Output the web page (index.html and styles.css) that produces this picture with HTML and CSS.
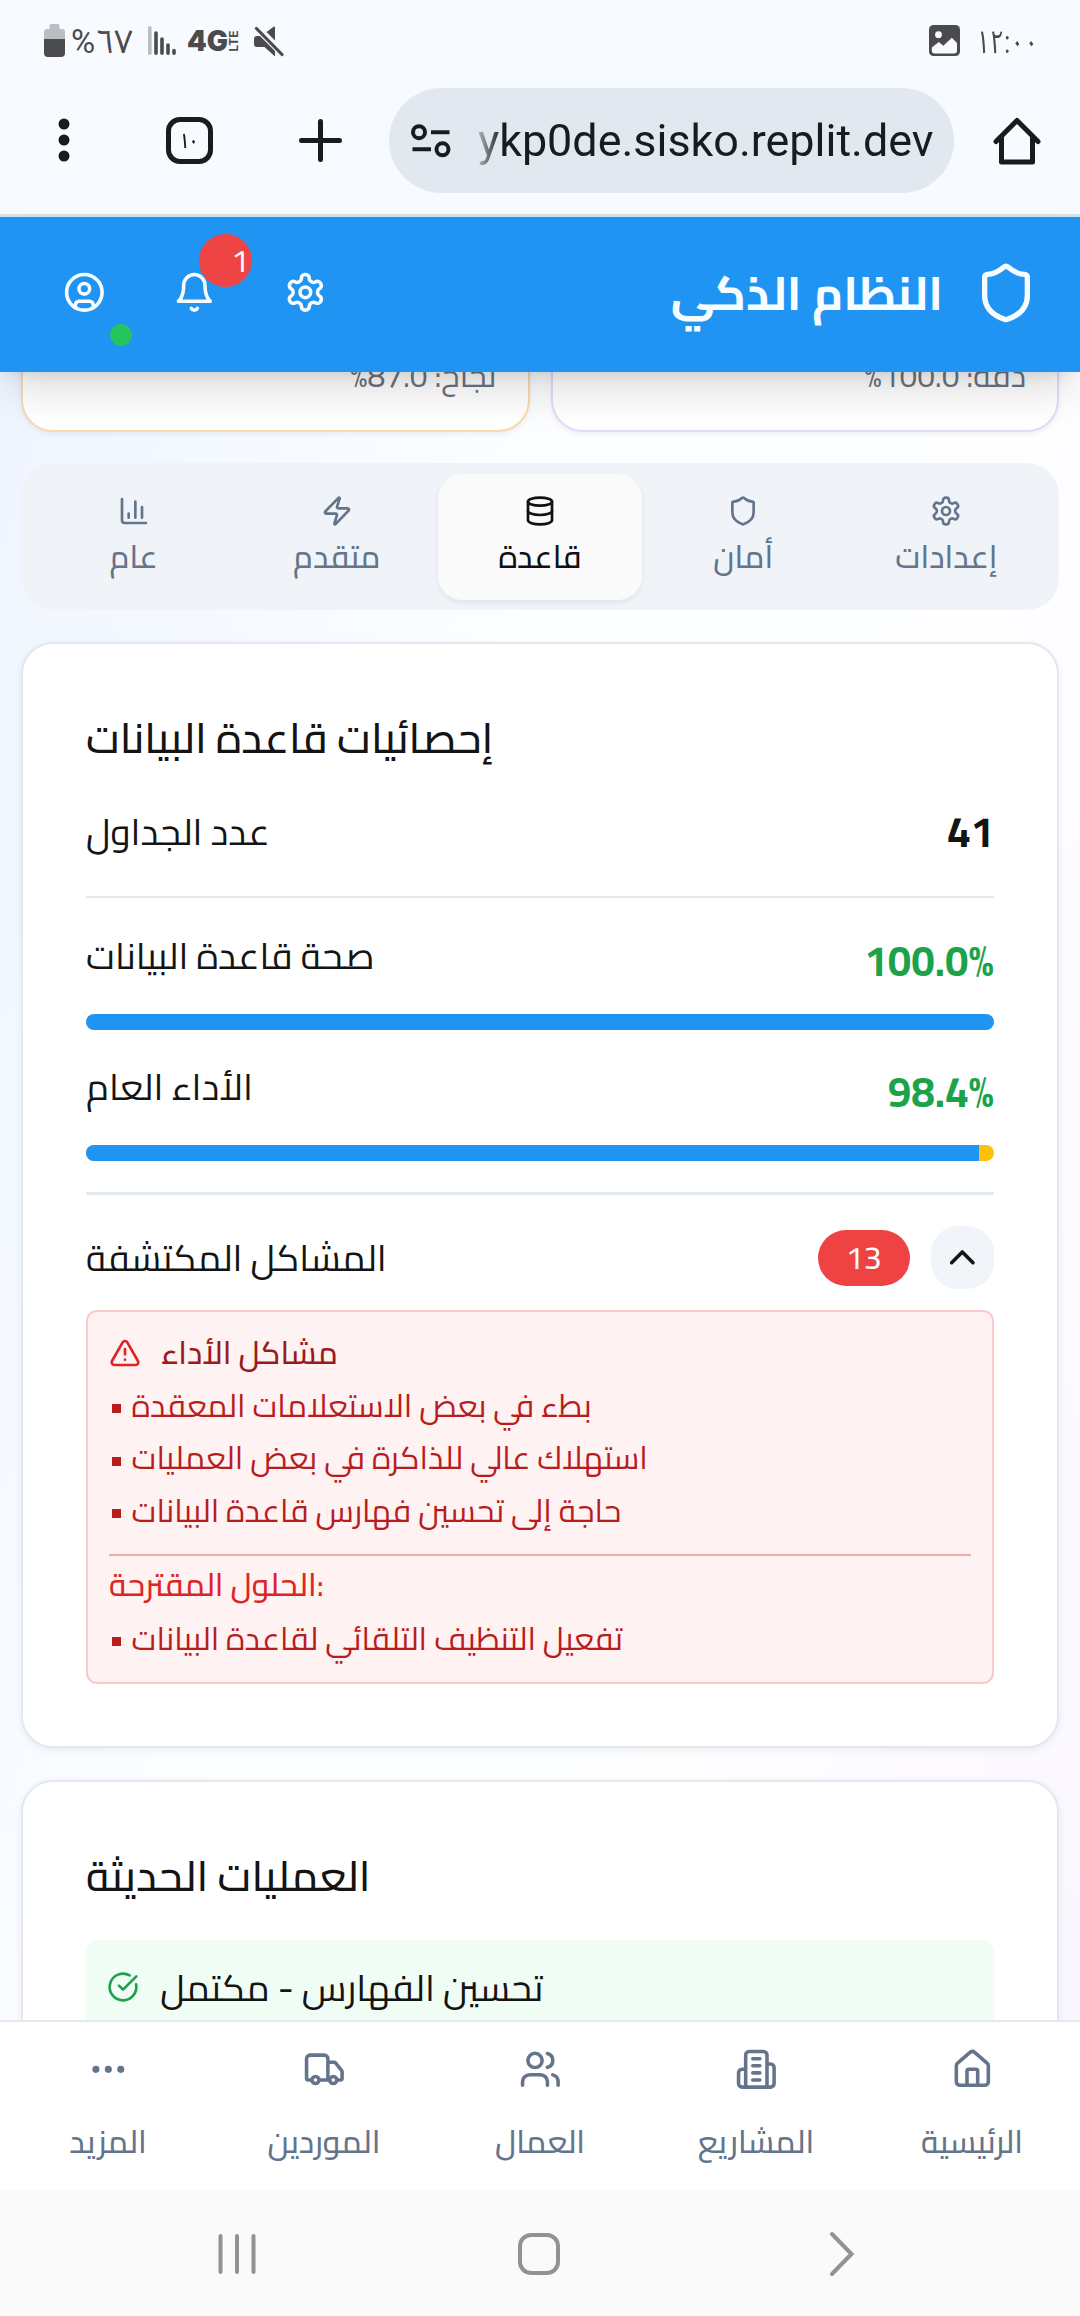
FILE: index.html
```html
<!DOCTYPE html>
<html lang="ar">
<head>
<meta charset="utf-8">
<title>النظام الذكي</title>
<link rel="stylesheet" href="styles.css">
</head>
<body>
<svg class="sprite" aria-hidden="true">
  <symbol id="gear" viewBox="0 0 24 24"><path d="M12.22 2h-.44a2 2 0 0 0-2 2v.18a2 2 0 0 1-1 1.73l-.43.25a2 2 0 0 1-2 0l-.15-.08a2 2 0 0 0-2.73.73l-.22.38a2 2 0 0 0 .73 2.73l.15.1a2 2 0 0 1 1 1.72v.51a2 2 0 0 1-1 1.74l-.15.09a2 2 0 0 0-.73 2.73l.22.38a2 2 0 0 0 2.73.73l.15-.08a2 2 0 0 1 2 0l.43.25a2 2 0 0 1 1 1.73V20a2 2 0 0 0 2 2h.44a2 2 0 0 0 2-2v-.18a2 2 0 0 1 1-1.73l.43-.25a2 2 0 0 1 2 0l.15.08a2 2 0 0 0 2.73-.73l.22-.39a2 2 0 0 0-.73-2.73l-.15-.08a2 2 0 0 1-1-1.74v-.5a2 2 0 0 1 1-1.74l.15-.09a2 2 0 0 0 .73-2.73l-.22-.38a2 2 0 0 0-2.73-.73l-.15.08a2 2 0 0 1-2 0l-.43-.25a2 2 0 0 1-1-1.73V4a2 2 0 0 0-2-2z"/><circle cx="12" cy="12" r="3"/></symbol>
  <symbol id="shield" viewBox="0 0 24 24"><path d="M20 13c0 5-3.5 7.5-7.66 8.95a1 1 0 0 1-.67-.01C7.5 20.5 4 18 4 13V6a1 1 0 0 1 1-1c2 0 4.5-1.2 6.24-2.72a1.17 1.17 0 0 1 1.52 0C14.51 3.81 17 5 19 5a1 1 0 0 1 1 1z"/></symbol>
</svg>

<div class="status">
  <div class="status-left">
    <svg class="battery" viewBox="0 0 21 33"><path class="battery-empty" d="M5.500 1.500a1.500 1.500 0 0 1 1.500-1.500h7a1.500 1.500 0 0 1 1.500 1.500V5H18a3 3 0 0 1 3 3v7H0V8a3 3 0 0 1 3-3h2.500z"/><path class="battery-full" d="M0 15h21v14a4 4 0 0 1-4 4H4a4 4 0 0 1-4-4z"/></svg>
    <span class="percent">%٦٧</span>
    <svg class="signal" viewBox="0 0 28 29"><g stroke-width="3.600" stroke-linecap="round"><path class="signal-off" d="M1.800 1.800v25.400"/><path d="M8 7v20.200M14 13v14.200M20 19v8.200M26 24.500v2.700"/></g></svg>
    <svg class="lte" viewBox="0 0 51 22"><text class="lte-main" x="-1" y="21" textLength="41" lengthAdjust="spacingAndGlyphs">4G</text><text class="lte-sub" transform="translate(50 21.500) rotate(-90)" textLength="21" lengthAdjust="spacingAndGlyphs">LTE</text></svg>
    <svg class="mute" viewBox="0 0 30 31"><path class="fill" d="M0 13a3 3 0 0 1 3-3h3l15 15v5.500L10.500 21H3a3 3 0 0 1-3-3zM21 1v13.500L12.500 6 20 .5z"/><path class="slash" d="M2.500 2.500l25.500 26"/></svg>
  </div>
  <div class="status-right">
    <svg class="photo" viewBox="0 0 31 31"><rect width="31" height="31" rx="4.500"/><circle class="hole" cx="9.500" cy="9.700" r="3.400"/><path class="hole" d="M2.800 22.500l7-5.500 4.500 3.800 8.500-8 5.200 5.200v7.500a3 3 0 0 1-3 3H5.800a3 3 0 0 1-3-3z"/></svg>
    <span class="clock">١٢:٠٠</span>
  </div>
</div>

<div class="toolbar">
  <svg class="more" viewBox="0 0 12 44"><circle cx="6" cy="6" r="5.500"/><circle cx="6" cy="22" r="5.500"/><circle cx="6" cy="38" r="5.500"/></svg>
  <div class="tabcount"><span>١٠</span></div>
  <svg class="plus" viewBox="0 0 43 43"><path d="M21.500 2.500v38M2.500 21.500h38"/></svg>
  <div class="url">
    <svg class="tune" viewBox="0 0 40 34"><circle cx="8" cy="8.200" r="6"/><path d="M20 8.200h18.500M1.500 25.300h18.500"/><circle cx="31.500" cy="25.300" r="6"/></svg>
    <span class="address">ykp0de.sisko.replit.dev</span>
  </div>
  <svg class="browser-home" viewBox="0 0 48 48"><path d="M3 24.500L24 3.500l21 21M8.500 20v25h31V20"/></svg>
</div>

<header class="header">
  <div class="header-actions">
    <div class="action"><svg class="icon" viewBox="0 0 24 24"><circle cx="12" cy="12" r="10"/><circle cx="12" cy="10" r="3"/><path d="M7 20.662V19a2 2 0 0 1 2-2h6a2 2 0 0 1 2 2v1.662"/></svg><span class="online"></span></div>
    <div class="action"><svg class="icon" viewBox="0 0 24 24"><path d="M6 8a6 6 0 0 1 12 0c0 7 3 9 3 9H3s3-2 3-9"/><path d="M10.300 21a1.940 1.940 0 0 0 3.400 0"/></svg><span class="count">1</span></div>
    <div class="action"><svg class="icon"><use href="#gear"/></svg></div>
  </div>
  <div class="brand"><h1>النظام الذكي</h1><svg class="icon brand-icon"><use href="#shield"/></svg></div>
</header>

<main class="main">
  <div class="metrics">
    <div class="metric orange" dir="rtl">نجاح: 87.0%</div>
    <div class="metric purple" dir="rtl">دقة: 100.0%</div>
  </div>

  <div class="tabs">
    <div class="tab"><svg class="icon small" viewBox="0 0 24 24"><path d="M3 3v16a2 2 0 0 0 2 2h16M18 17V9M13 17V5M8 17v-3"/></svg><span>عام</span></div>
    <div class="tab"><svg class="icon small" viewBox="0 0 24 24"><path d="M4 14a1 1 0 0 1-.78-1.630l9.900-10.200a.5.5 0 0 1 .86.46l-1.920 6.020A1 1 0 0 0 13 10h7a1 1 0 0 1 .78 1.630l-9.900 10.200a.5.5 0 0 1-.86-.46l1.920-6.020A1 1 0 0 0 11 14z"/></svg><span>متقدم</span></div>
    <div class="tab active"><svg class="icon small" viewBox="0 0 24 24"><ellipse cx="12" cy="5" rx="9" ry="3"/><path d="M3 5V19A9 3 0 0 0 21 19V5"/><path d="M3 12A9 3 0 0 0 21 12"/></svg><span>قاعدة</span></div>
    <div class="tab"><svg class="icon small"><use href="#shield"/></svg><span>أمان</span></div>
    <div class="tab"><svg class="icon small"><use href="#gear"/></svg><span>إعدادات</span></div>
  </div>

  <section class="card">
    <h2>إحصائيات قاعدة البيانات</h2>
    <div class="row row-tables"><span>عدد الجداول</span><b>41</b></div>
    <div class="row row-health"><span>صحة قاعدة البيانات</span><b class="good">100.0%</b></div>
    <div class="bar"><div class="bar-fill" style="width:100%"></div></div>
    <div class="row row-perf"><span>الأداء العام</span><b class="good">98.4%</b></div>
    <div class="bar"><div class="bar-fill" style="width:98.4%"></div></div>
    <div class="problems-head">
      <span>المشاكل المكتشفة</span>
      <div class="problems-tools"><span class="pill">13</span><span class="toggle"><svg class="icon small" viewBox="0 0 24 24"><path d="m18 15-6-6-6 6"/></svg></span></div>
    </div>
    <div class="alert">
      <div class="alert-title"><svg class="icon small" viewBox="0 0 24 24"><path d="m21.730 18-8-14a2 2 0 0 0-3.480 0l-8 14A2 2 0 0 0 4 21h16a2 2 0 0 0 1.730-3"/><path d="M12 9v4M12 17h.01"/></svg><span>مشاكل الأداء</span></div>
      <ul>
        <li>بطء في بعض الاستعلامات المعقدة</li>
        <li>استهلاك عالي للذاكرة في بعض العمليات</li>
        <li>حاجة إلى تحسين فهارس قاعدة البيانات</li>
      </ul>
      <div class="fixes">
        <p>الحلول المقترحة:</p>
        <ul><li>تفعيل التنظيف التلقائي لقاعدة البيانات</li></ul>
      </div>
    </div>
  </section>

  <section class="card">
    <h2>العمليات الحديثة</h2>
    <div class="done"><svg class="icon small" viewBox="0 0 24 24"><path d="M21.801 10A10 10 0 1 1 17 3.335"/><path d="m9 11 3 3L22 4"/></svg><span>تحسين الفهارس - مكتمل</span></div>
  </section>
</main>

<nav class="nav">
  <div class="nav-item"><svg class="icon" viewBox="0 0 24 24"><circle cx="12" cy="12" r="1"/><circle cx="19" cy="12" r="1"/><circle cx="5" cy="12" r="1"/></svg><span>المزيد</span></div>
  <div class="nav-item"><svg class="icon" viewBox="0 0 24 24"><path d="M14 18V6a2 2 0 0 0-2-2H4a2 2 0 0 0-2 2v11a1 1 0 0 0 1 1h2M15 18H9M19 18h2a1 1 0 0 0 1-1v-3.650a1 1 0 0 0-.22-.624l-3.480-4.350A1 1 0 0 0 17.520 8H14"/><circle cx="17" cy="18" r="2"/><circle cx="7" cy="18" r="2"/></svg><span>الموردين</span></div>
  <div class="nav-item"><svg class="icon" viewBox="0 0 24 24"><path d="M16 21v-2a4 4 0 0 0-4-4H6a4 4 0 0 0-4 4v2"/><circle cx="9" cy="7" r="4"/><path d="M22 21v-2a4 4 0 0 0-3-3.870M16 3.130a4 4 0 0 1 0 7.750"/></svg><span>العمال</span></div>
  <div class="nav-item"><svg class="icon" viewBox="0 0 24 24"><path d="M6 22V4a2 2 0 0 1 2-2h8a2 2 0 0 1 2 2v18ZM6 12H4a2 2 0 0 0-2 2v6a2 2 0 0 0 2 2h2M18 9h2a2 2 0 0 1 2 2v9a2 2 0 0 1-2 2h-2M10 6h4M10 10h4M10 14h4M10 18h4"/></svg><span>المشاريع</span></div>
  <div class="nav-item"><svg class="icon" viewBox="0 0 24 24"><path d="M15 21v-8a1 1 0 0 0-1-1h-4a1 1 0 0 0-1 1v8"/><path d="M3 10a2 2 0 0 1 .709-1.528l7-5.999a2 2 0 0 1 2.582 0l7 5.999A2 2 0 0 1 21 10v9a2 2 0 0 1-2 2H5a2 2 0 0 1-2-2z"/></svg><span>الرئيسية</span></div>
</nav>

<div class="system">
  <svg class="recents" viewBox="0 0 40 42"><path d="M3.500 3v36M20 3v36M36.500 3v36"/></svg>
  <svg class="sys-home" viewBox="0 0 42 42"><rect x="2" y="2" width="38" height="38" rx="11"/></svg>
  <svg class="back" viewBox="0 0 24 44"><path d="M2 2l19.500 20L2 42"/></svg>
</div>
</body>
</html>
```
FILE: styles.css
```css
* { box-sizing: border-box; margin: 0; padding: 0; }
html, body { height: 2316px; width: 1080px; overflow: hidden; }
body {
  display: flex;
  flex-direction: column;
  background: #fff;
  color: #141414;
  font-family: Cairo, "DejaVu Sans", sans-serif;
  font-size: 36.850px;
  font-weight: 400;
  line-height: 53.33px;
}
svg { display: block; flex: none; overflow: visible; }
.sprite { width: 0; height: 0; position: absolute; }
ul { list-style: none; }

.icon {
  width: 42.67px;
  height: 42.67px;
  fill: none;
  stroke: currentColor;
  stroke-width: 2;
  stroke-linecap: round;
  stroke-linejoin: round;
}
.icon.small { width: 32px; height: 32px; }

/* phone status bar */
.status {
  height: 82px;
  flex: none;
  display: flex;
  justify-content: space-between;
  align-items: flex-start;
  padding: 24px 46px 0 44px;
  background: #f7faff;
  color: #4b4b4d;
  font-family: Roboto, "Noto Sans Arabic", "DejaVu Sans", sans-serif;
}
.status-left, .status-right { display: flex; }
.battery { width: 21px; height: 33px; }
.battery-empty { fill: #babdc2; }
.battery-full { fill: #4b4b4d; }
.percent { width: 62px; margin: 2px 0 0 6px; font-size: 33px; line-height: 32px; white-space: nowrap; }
.signal { width: 28px; height: 29px; margin: 2px 0 0 15px; stroke: #4b4b4d; }
.signal-off { stroke: #babdc2; }
.lte { width: 51px; height: 22px; margin: 5.500px 0 0 12px; fill: #4b4b4d; font-family: Inter, sans-serif; font-weight: 900; }
.lte-main { font-size: 28px; }
.lte-sub { font-size: 11.500px; font-weight: 700; }
.mute { width: 30px; height: 31px; margin: 1.500px 0 0 15px; }
.mute .fill { fill: #4b4b4d; }
.slash { stroke: #4b4b4d; stroke-width: 3.200; stroke-linecap: round; }
.photo { width: 31px; height: 31px; margin-top: 1px; fill: #4b4b4d; }
.photo .hole { fill: #f7faff; }
.clock { margin: 2px 0 0 16px; width: 58px; font-size: 32px; line-height: 32px; white-space: nowrap; transform: scaleX(.77); transform-origin: left; }

/* browser toolbar */
.toolbar {
  height: 135px;
  flex: none;
  display: flex;
  align-items: flex-start;
  padding: 6px 39px 0 57.500px;
  background: #f7faff;
  border-bottom: 3px solid #d3e3ec;
  color: #181c1f;
}
.more { width: 12px; height: 44px; margin-top: 30px; fill: currentColor; }
.tabcount {
  width: 47px;
  height: 47px;
  margin: 29px 0 0 96.500px;
  border: 5px solid currentColor;
  border-radius: 14px;
  display: flex;
  align-items: center;
  justify-content: center;
  font: 600 21px/30px "Noto Sans Arabic", "DejaVu Sans", sans-serif;
}
.tabcount span { transform: scaleX(.75); }
.plus { width: 43px; height: 43px; margin: 31px 0 0 86px; fill: none; stroke: currentColor; stroke-width: 5; stroke-linecap: round; }
.url {
  width: 565px;
  height: 105px;
  margin-left: 47px;
  padding: 0 20px 0 22px;
  border-radius: 53px;
  background: #e1e8f0;
  display: flex;
  align-items: center;
}
.tune { width: 40px; height: 34px; fill: none; stroke: currentColor; stroke-width: 4; }
.address {
  margin-left: 27px;
  font: 400 44.900px/60px Roboto, sans-serif;
  white-space: nowrap;
  -webkit-mask-image: linear-gradient(to right, rgba(0,0,0,.25), #000 24px);
  mask-image: linear-gradient(to right, rgba(0,0,0,.25), #000 24px);
}
.browser-home { width: 48px; height: 48px; margin: 28.500px 0 0 39.500px; fill: none; stroke: currentColor; stroke-width: 5; stroke-linecap: round; stroke-linejoin: round; }

/* app header */
.header {
  height: 155px;
  flex: none;
  position: relative;
  z-index: 1;
  display: flex;
  justify-content: space-between;
  align-items: center;
  padding: 0 42px 4px 32px;
  background: #2094f3;
  color: #f7fdff;
  box-shadow: 0 26.670px 40px -8px rgba(0,0,0,.13), 0 10.670px 16px -10.670px rgba(0,0,0,.13);
}
.header-actions { display: flex; gap: 5.700px; }
.action { position: relative; width: 104.670px; height: 104px; display: flex; align-items: center; justify-content: center; }
.online { position: absolute; left: 78px; top: 83px; width: 22px; height: 22px; border-radius: 50%; background: #22c55e; }
.count {
  position: absolute;
  left: 57px;
  top: -7px;
  width: 53px;
  height: 53px;
  border-radius: 50%;
  background: #ef4444;
  font-size: 32px;
  line-height: 53px;
  padding-left: 32px;
}
.brand { display: flex; align-items: center; gap: 31px; }
.brand h1 { font-size: 47.200px; line-height: 75px; font-weight: 700; }
.brand-icon { width: 64px; height: 64px; }

/* page */
.main {
  flex: 1;
  min-height: 0;
  overflow: hidden;
  padding: 0 21px;
  background: linear-gradient(105deg, #eff5ff, #fdfeff 40%, #fefeff 70%, #faf5ff 105%);
}
.metrics { display: grid; grid-template-columns: 1fr 1fr; gap: 21px; margin-top: -140px; }
.metric {
  height: 200px;
  display: flex;
  align-items: flex-end;
  padding: 0 31px 32px;
  border: 2.670px solid;
  border-radius: 32px;
  background: #fff;
  color: #6b7280;
  font-size: 31.600px;
  line-height: 42.670px;
  box-shadow: 0 2.670px 5.330px rgba(0,0,0,.05);
}
.metric.orange { border-color: #fad9ae; }
.metric.purple { border-color: #e9d8fb; }

.tabs {
  height: 147px;
  margin-top: 31px;
  padding: 11px;
  display: grid;
  grid-template-columns: repeat(5, 1fr);
  border-radius: 32px;
  background: #f0f4f9;
  color: #64748b;
}
.tab {
  height: 126px;
  padding-top: 20.500px;
  display: flex;
  flex-direction: column;
  align-items: center;
  gap: 9px;
  border-radius: 24px;
  font-size: 31.600px;
  line-height: 42.670px;
  font-weight: 500;
}
.tab.active { background: #fafafa; color: #111; box-shadow: 0 2.670px 5.330px rgba(0,0,0,.06); }

.card {
  margin-top: 32px;
  padding: 61.500px 63px 62px;
  border: 2.670px solid #e2e8f0;
  border-radius: 32px;
  background: #fff;
  box-shadow: 0 2.670px 8px rgba(0,0,0,.06);
}
.card + .card { margin-top: 31.300px; padding-top: 62.500px; height: 600px; }
h2 { font-size: 42.500px; line-height: 64px; font-weight: 500; }
.row { display: flex; justify-content: space-between; align-items: flex-start; height: 64px; }
.row b { font-size: 42.300px; line-height: 64px; font-weight: 700; }
.row .good { color: #1ca34a; }
.row-tables { height: 98px; margin-top: 30px; border-bottom: 2.670px solid #e2e8f0; padding-bottom: 32px; align-items: center; }
.row-health { margin-top: 31.500px; }
.row-perf { margin-top: 30.500px; }
.bar { height: 16px; margin-top: 20.700px; border-radius: 8px; overflow: hidden; background: #ffc107; }
.bar-fill { height: 100%; background: #2094f3; }
.problems-head {
  display: flex;
  justify-content: space-between;
  align-items: center;
  margin-top: 31px;
  padding-top: 31px;
  border-top: 3px solid #e2e8f0;
}
.problems-tools { display: flex; align-items: center; gap: 21.300px; }
.pill { width: 92px; height: 56px; border-radius: 28px; background: #ef4343; color: #fafafa; font-size: 32px; line-height: 55px; font-weight: 500; text-align: center; }
.toggle { width: 63px; height: 63.500px; border-radius: 27px; background: #f1f5f9; display: flex; align-items: center; justify-content: center; }
.toggle .icon { width: 42.670px; height: 42.670px; }

.alert {
  margin-top: 21px;
  height: 374px;
  padding: 19.500px 21px;
  border: 2.670px solid #facaca;
  border-radius: 11px;
  background: #fef2f2;
  color: #b91c1c;
  font-size: 31.550px;
  line-height: 42.670px;
}
.alert-title { display: flex; align-items: center; gap: 20px; color: #991b1b; font-weight: 500; }
.alert-title .icon { color: #dc2626; }
.alert li { display: flex; align-items: center; margin-top: 10px; }
.alert li::before { content: ""; width: 9px; height: 9px; margin: 5px 10.500px 0 3px; background: #b91c1c; }
.fixes { margin-top: 21.300px; border-top: 2.670px solid #f1aaaa; padding-top: 8.500px; }
.fixes p { color: #dc2626; font-weight: 500; }
.fixes li { margin-top: 10.500px; }

.done {
  display: flex;
  align-items: center;
  gap: 21.300px;
  margin-top: 32px;
  padding: 20.500px 21px;
  border-radius: 11px;
  background: #f0fdf4;
}
.done .icon { color: #1fa04d; }

/* bottom navigation */
.nav {
  height: 170px;
  flex: none;
  display: grid;
  grid-template-columns: repeat(5, 1fr);
  background: #fff;
  border-top: 2px solid #e2e8f0;
  color: #64748b;
}
.nav-item { display: flex; flex-direction: column; align-items: center; padding-top: 25.500px; gap: 30.500px; font-size: 31.700px; line-height: 42.670px; font-weight: 500; }

/* system navigation */
.system { height: 126px; flex: none; display: flex; padding-left: 217px; background: #fafafa; fill: none; stroke: #929292; stroke-width: 4; stroke-linecap: round; }
.recents { width: 40px; height: 42px; margin-top: 43px; }
.sys-home { width: 42px; height: 42px; margin: 43px 0 0 261px; }
.back { width: 24px; height: 44px; margin: 42px 0 0 270px; }
```
